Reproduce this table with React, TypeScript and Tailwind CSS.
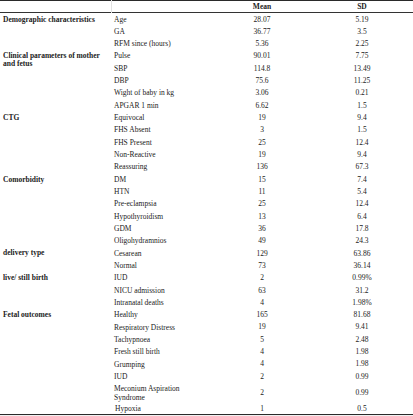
type Row = { label: string; mean: string; sd: string; tall?: boolean; indent?: boolean };
type Group = { title: string[]; rows: Row[] };

const groups: Group[] = [
  {
    title: ["Demographic characteristics"],
    rows: [
      { label: "Age", mean: "28.07", sd: "5.19" },
      { label: "GA", mean: "36.77", sd: "3.5" },
      { label: "RFM since (hours)", mean: "5.36", sd: "2.25" },
    ],
  },
  {
    title: ["Clinical parameters of mother", "and fetus"],
    rows: [
      { label: "Pulse", mean: "90.01", sd: "7.75" },
      { label: "SBP", mean: "114.8", sd: "13.49" },
      { label: "DBP", mean: "75.6", sd: "11.25" },
      { label: "Wight of baby in kg", mean: "3.06", sd: "0.21" },
      { label: "APGAR 1 min", mean: "6.62", sd: "1.5" },
    ],
  },
  {
    title: ["CTG"],
    rows: [
      { label: "Equivocal", mean: "19", sd: "9.4" },
      { label: "FHS Absent", mean: "3", sd: "1.5" },
      { label: "FHS Present", mean: "25", sd: "12.4" },
      { label: "Non-Reactive", mean: "19", sd: "9.4" },
      { label: "Reassuring", mean: "136", sd: "67.3" },
    ],
  },
  {
    title: ["Comorbidity"],
    rows: [
      { label: "DM", mean: "15", sd: "7.4" },
      { label: "HTN", mean: "11", sd: "5.4" },
      { label: "Pre-eclampsia", mean: "25", sd: "12.4" },
      { label: "Hypothyroidism", mean: "13", sd: "6.4" },
      { label: "GDM", mean: "36", sd: "17.8" },
      { label: "Oligohydramnios", mean: "49", sd: "24.3" },
    ],
  },
  {
    title: ["delivery type"],
    rows: [
      { label: "Cesarean", mean: "129", sd: "63.86" },
      { label: "Normal", mean: "73", sd: "36.14" },
    ],
  },
  {
    title: ["live/ still birth"],
    rows: [
      { label: "IUD", mean: "2", sd: "0.99%" },
      { label: "NICU admission", mean: "63", sd: "31.2" },
      { label: "Intranatal deaths", mean: "4", sd: "1.98%" },
    ],
  },
  {
    title: ["Fetal outcomes"],
    rows: [
      { label: "Healthy", mean: "165", sd: "81.68" },
      { label: "Respiratory Distress", mean: "19", sd: "9.41" },
      { label: "Tachypnoea", mean: "5", sd: "2.48" },
      { label: "Fresh still birth", mean: "4", sd: "1.98" },
      { label: "Grumping", mean: "4", sd: "1.98" },
      { label: "IUD", mean: "2", sd: "0.99" },
      { label: "Meconium Aspiration Syndrome", mean: "2", sd: "0.99", tall: true },
      { label: "Hypoxia", mean: "1", sd: "0.5", indent: true },
    ],
  },
];

export default function App() {
  return (
    <div className="w-[413px] h-[416px] bg-white overflow-hidden text-[#222] text-[7.5px] font-['Liberation_Serif',serif]">
      <table className="w-[413px] table-fixed border-collapse border-t-[1.5px] border-b-[1.5px] border-[#2a2a2a]">
        <colgroup>
          <col className="w-[111px]" />
          <col className="w-[102px]" />
          <col className="w-[98px]" />
          <col className="w-[102px]" />
        </colgroup>
        <thead>
          <tr className="h-[11.5px] border-b border-[#333]">
            <th className="border-r border-[#e2e2e2]"></th>
            <th></th>
            <th className="text-center font-bold">Mean</th>
            <th className="text-center font-bold">SD</th>
          </tr>
        </thead>
        <tbody>
          {groups.map((g) =>
            g.rows.map((r, i) => (
              <tr key={g.title[0] + r.label} className={r.tall ? "h-[20px]" : "h-[12.33px]"}>
                {i === 0 && (
                  <td rowSpan={g.rows.length} className="align-top pl-[3px] pt-[2.5px] font-bold leading-[8px]">
                    {g.title.map((t) => (
                      <div key={t}>{t}</div>
                    ))}
                  </td>
                )}
                <td className={`align-middle leading-[9px] ${r.indent ? "pl-[4px]" : "pl-[3px]"} ${r.tall ? "pr-[30px]" : ""}`}>
                  {r.label}
                </td>
                <td className="text-center align-middle">{r.mean}</td>
                <td className="text-center align-middle">{r.sd}</td>
              </tr>
            ))
          )}
        </tbody>
      </table>
      <div className="h-[4px] bg-[#f0f0f0]"></div>
    </div>
  );
}
